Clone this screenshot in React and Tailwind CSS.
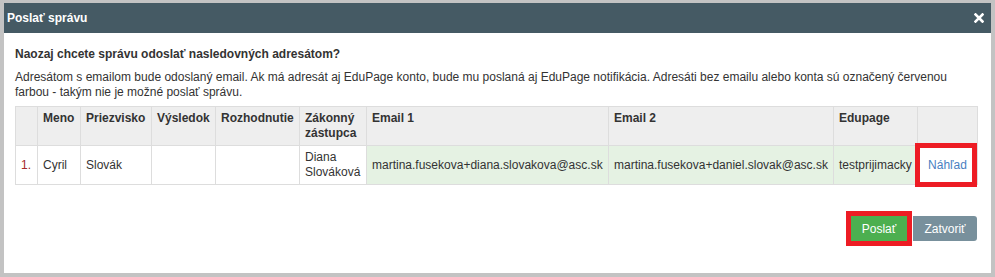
import React from 'react';

const cols = [22, 43, 71, 64, 84, 67, 242, 225, 84, 60];

function App() {
  return (
    <div
      className="w-[995px] h-[277px] bg-[#c3c3c3] pt-[3px] pl-[4px] pr-[4px] pb-[4px] text-[12px] text-[#333]"
      style={{ fontFamily: '"Liberation Sans", Arial, sans-serif' }}
    >
      <div className="h-full bg-white flex flex-col">
        {/* Header */}
        <div className="h-[30px] bg-[#455a64] flex items-center justify-between pl-[3px] pr-[6px]">
          <span className="font-bold text-white text-[12px]">Poslať správu</span>
          <svg width="10" height="10" viewBox="0 0 10 10" className="mr-[1px]">
            <path d="M1.5 1.5 L8.5 8.5 M8.5 1.5 L1.5 8.5" stroke="white" strokeWidth="2.6" strokeLinecap="square" />
          </svg>
        </div>

        {/* Body */}
        <div className="pl-[11px] pr-[14px] pt-[14px]">
          <p className="font-bold leading-[15px]">Naozaj chcete správu odoslať nasledovných adresátom?</p>
          <p className="mt-[8px] leading-[15px]">
            Adresátom s emailom bude odoslaný email. Ak má adresát aj EduPage konto, bude mu poslaná aj EduPage notifikácia. Adresáti bez emailu alebo konta sú označený červenou farbou - takým nie je možné poslať správu.
          </p>

          <table className="mt-[6px] w-[962px] table-fixed border-collapse">
            <colgroup>
              {cols.map((w, i) => (
                <col key={i} style={{ width: w }} />
              ))}
            </colgroup>
            <thead>
              <tr className="h-[39px] bg-[#eeeeee] font-bold text-left">
                <th className="border border-[#dddddd] align-top px-[5px] pt-[4px]"></th>
                <th className="border border-[#dddddd] align-top px-[5px] pt-[4px] leading-[15px]">Meno</th>
                <th className="border border-[#dddddd] align-top px-[5px] pt-[4px] leading-[15px]">Priezvisko</th>
                <th className="border border-[#dddddd] align-top px-[5px] pt-[4px] leading-[15px]">Výsledok</th>
                <th className="border border-[#dddddd] align-top px-[5px] pt-[4px] leading-[15px]">Rozhodnutie</th>
                <th className="border border-[#dddddd] align-top px-[5px] pt-[4px] leading-[15px]">Zákonný zástupca</th>
                <th className="border border-[#dddddd] align-top px-[5px] pt-[4px] leading-[15px]">Email 1</th>
                <th className="border border-[#dddddd] align-top px-[5px] pt-[4px] leading-[15px]">Email 2</th>
                <th className="border border-[#dddddd] align-top px-[5px] pt-[4px] leading-[15px]">Edupage</th>
                <th className="border border-[#dddddd] align-top px-[5px] pt-[4px]"></th>
              </tr>
            </thead>
            <tbody>
              <tr className="h-[39px]">
                <td className="border border-[#dddddd] px-[5px] text-[#a52a2a]">1.</td>
                <td className="border border-[#dddddd] px-[5px]">Cyril</td>
                <td className="border border-[#dddddd] px-[5px]">Slovák</td>
                <td className="border border-[#dddddd] px-[5px]"></td>
                <td className="border border-[#dddddd] px-[5px]"></td>
                <td className="border border-[#dddddd] px-[5px] leading-[15px]">Diana Slováková</td>
                <td className="border border-[#dddddd] px-[5px] bg-[#e5f2e3]">martina.fusekova+diana.slovakova@asc.sk</td>
                <td className="border border-[#dddddd] px-[5px] bg-[#e5f2e3]">martina.fusekova+daniel.slovak@asc.sk</td>
                <td className="border border-[#dddddd] px-[5px] bg-[#e5f2e3]">testprijimacky</td>
                <td className="border border-[#dddddd] px-[5px] text-center relative">
                  <span className="text-[#4a7fc1]">Náhľad</span>
                  <span className="absolute -left-[3px] -top-[3px] right-0 -bottom-[3px] border-[5px] border-[#ed1c24]"></span>
                </td>
              </tr>
            </tbody>
          </table>

          {/* Footer buttons */}
          <div className="flex justify-end items-center mt-[26px] pr-[0px]">
            <div className="border-[5px] border-[#ed1c24]">
              <button className="w-[56px] h-[25px] bg-[#4caf50] text-white text-[12px]">Poslať</button>
            </div>
            <button className="ml-px w-[64px] h-[25px] bg-[#78909c] text-white text-[12px] rounded-r-[3px]">Zatvoriť</button>
          </div>
        </div>
      </div>
    </div>
  );
}

export default App;
